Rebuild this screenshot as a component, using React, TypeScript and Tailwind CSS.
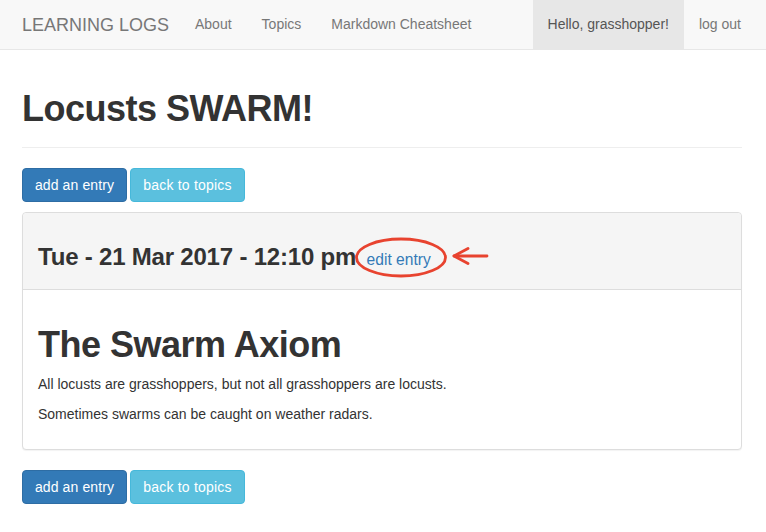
import React from 'react';

const navLinks = ['About', 'Topics', 'Markdown Cheatsheet'];

const Buttons: React.FC = () => (
  <div className="flex gap-[3px]">
    <button className="w-[105px] rounded-[4px] border border-[#2e6da4] bg-[#337ab7] py-[6px] text-center text-[14px] leading-[20px] tracking-[0.1px] text-white">
      add an entry
    </button>
    <button className="w-[115px] rounded-[4px] border border-[#46b8da] bg-[#5bc0de] py-[6px] text-center text-[14px] leading-[20px] tracking-[0.2px] text-white">
      back to topics
    </button>
  </div>
);

const App: React.FC = () => {
  return (
    <div className="min-h-[532px] bg-white font-['Liberation_Sans',Arial,sans-serif] text-[#333]">
      {/* navbar */}
      <nav className="flex h-[50px] items-stretch border-b border-[#e7e7e7] bg-[#f8f8f8] text-[14px] text-[#777]">
        <div className="ml-[22px] w-[158px] whitespace-nowrap py-[15px] text-[18px] leading-[20px]">LEARNING LOGS</div>
        {navLinks.map((l) => (
          <a key={l} className="whitespace-nowrap px-[15px] py-[15px] leading-[19px]">
            {l}
          </a>
        ))}
        <div className="ml-auto mr-[10px] flex">
          <a className="whitespace-nowrap bg-[#e7e7e7] px-[15px] py-[15px] leading-[19px] text-[#555]">Hello, grasshopper!</a>
          <a className="whitespace-nowrap px-[15px] py-[15px] leading-[19px]">log out</a>
        </div>
      </nav>

      <div className="ml-[22px] w-[720px]">
        {/* page header */}
        <div className="mt-[39px] border-b border-[#eee] pb-[18px]">
          <h1 className="text-[36px] font-bold leading-[40px] tracking-[-0.5px]">Locusts SWARM!</h1>
        </div>

        <div className="mt-[20px]">
          <Buttons />
        </div>

        {/* entry panel */}
        <div className="mt-[10px] rounded-[4px] border border-[#ddd] bg-white shadow-[0_1px_1px_rgba(0,0,0,0.05)]">
          <div className="rounded-t-[4px] border-b border-[#ddd] bg-[#f5f5f5] px-[15px] pb-[19px] pt-[31px]">
            <h3 className="h-[26px] whitespace-nowrap text-[24px] font-bold leading-[26px] tracking-[-0.2px]">
              Tue - 21 Mar 2017 - 12:10 pm{' '}
              <small className="relative ml-[4px] text-[15.6px] font-normal leading-none tracking-normal text-[#337ab7]">
                edit entry
                <svg className="absolute left-[-12px] top-[-16px]" width="140" height="50" viewBox="0 0 140 50" fill="none">
                  <ellipse cx="46" cy="22.5" rx="44.5" ry="18.5" stroke="#e8432f" strokeWidth="2.8" />
                  <path d="M99 21 L132 21" stroke="#e8432f" strokeWidth="2.8" strokeLinecap="round" />
                  <path d="M113 13.5 L99 21 L113 28.5" stroke="#e8432f" strokeWidth="2.8" strokeLinecap="round" strokeLinejoin="round" />
                </svg>
              </small>
            </h3>
          </div>
          <div className="px-[15px] pb-[15px] pt-[35px]">
            <h1 className="text-[36px] font-bold leading-[40px] tracking-[-0.5px]">The Swarm Axiom</h1>
            <p className="mt-[9px] text-[14px] leading-[20px]">All locusts are grasshoppers, but not all grasshoppers are locusts.</p>
            <p className="mt-[10px] mb-[10px] text-[14px] leading-[20px]">Sometimes swarms can be caught on weather radars.</p>
          </div>
        </div>

        <div className="mt-[20px]">
          <Buttons />
        </div>
      </div>
    </div>
  );
};

export default App;
